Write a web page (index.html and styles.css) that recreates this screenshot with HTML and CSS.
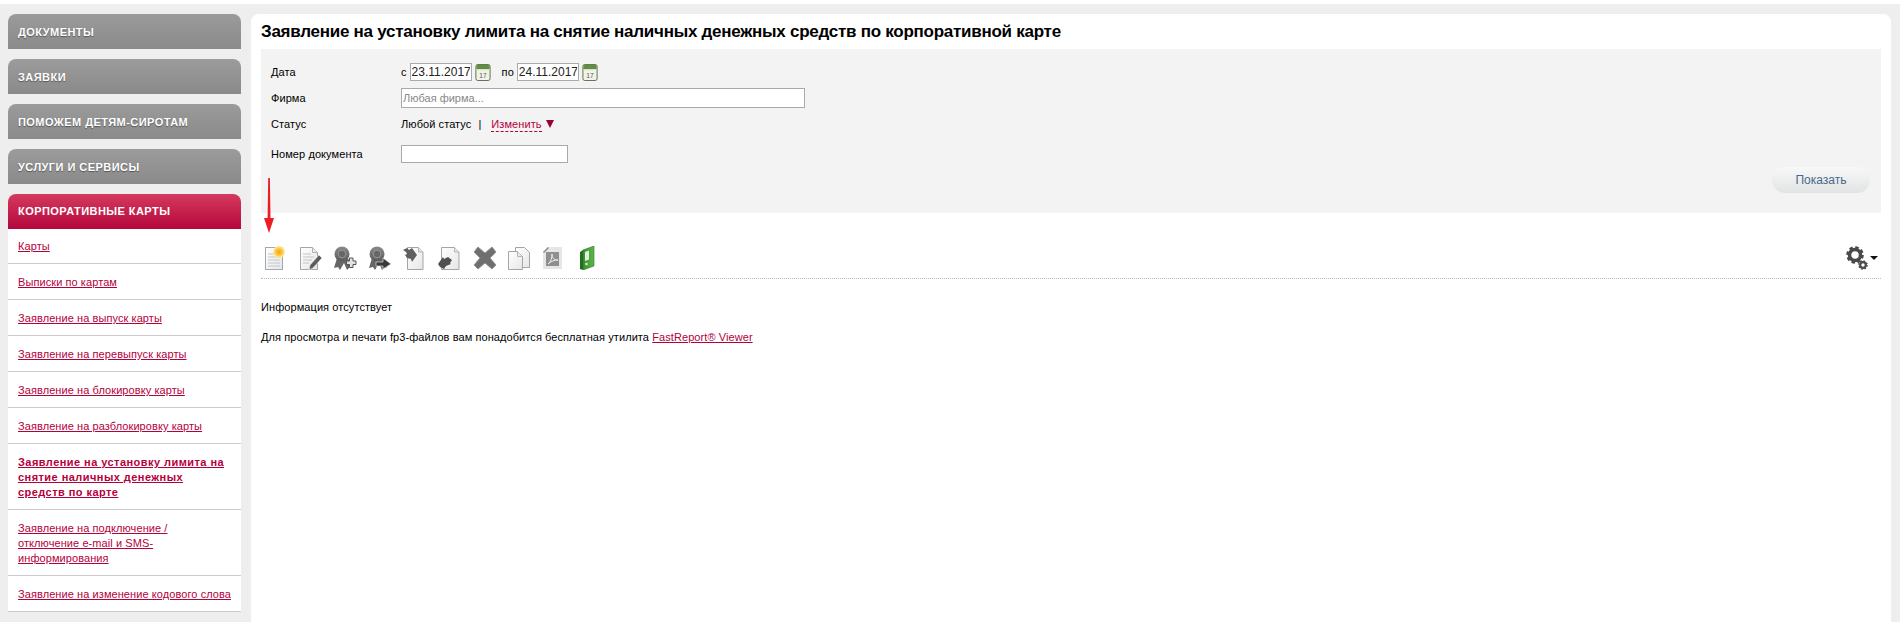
FILE: index.html
```html
<!DOCTYPE html>
<html lang="ru">
<head>
<meta charset="utf-8">
<link rel="stylesheet" href="styles.css">
</head>
<body>
<svg class="defs" width="0" height="0">
    <defs>
        <linearGradient id="seal" x1="0" y1="0" x2="0" y2="1"><stop offset="0" stop-color="#8a8a8a"/><stop offset="1" stop-color="#5a5a5a"/></linearGradient>
        <linearGradient id="paper" x1="0" y1="0" x2="1" y2="1"><stop offset="0" stop-color="#fff"/><stop offset="1" stop-color="#e6e6e6"/></linearGradient>
        <linearGradient id="binder" x1="0" y1="0" x2="1" y2="0"><stop offset="0" stop-color="#3b8f30"/><stop offset="1" stop-color="#5fb548"/></linearGradient>
        <radialGradient id="spark"><stop offset="0" stop-color="#f7a11c"/><stop offset=".55" stop-color="#fdc63d"/><stop offset="1" stop-color="#ffeeb0"/></radialGradient>
        <symbol id="ribbon" viewBox="0 0 24 24">
            <path d="M4 12l-3 10 4-1 2 3 4-7 3 7 3-3 2 1-4-10z" fill="#666"/>
            <circle cx="9" cy="8" r="7.500" fill="url(#seal)"/>
            <circle cx="9" cy="8" r="3.800" fill="#666" stroke="#979797"/>
        </symbol>
        <symbol id="calendar" viewBox="0 0 16 18">
            <rect x=".5" y=".5" width="15" height="17" rx="2" fill="#f1f3e6" stroke="#5c6b4a"/>
            <path d="M1 2.500a1.500 1.500 0 0 1 1.500-1.500h11a1.500 1.500 0 0 1 1.500 1.500v3h-14z" fill="#5f8f3f"/>
            <path d="M1 6h14" stroke="#dbe4c8"/>
            <text x="8" y="15" text-anchor="middle" class="cal_day">17</text>
        </symbol>
    </defs>
</svg>

<div class="page">
    <div class="side">
        <div class="side_head">Документы</div>
        <div class="side_head">Заявки</div>
        <div class="side_head">Поможем детям-сиротам</div>
        <div class="side_head">Услуги и сервисы</div>
        <div class="side_head side_on">Корпоративные карты</div>
        <ul class="side_menu">
            <li><a href="#">Карты</a></li>
            <li><a href="#">Выписки по картам</a></li>
            <li><a href="#">Заявление на выпуск карты</a></li>
            <li><a href="#">Заявление на перевыпуск карты</a></li>
            <li><a href="#">Заявление на блокировку карты</a></li>
            <li><a href="#">Заявление на разблокировку карты</a></li>
            <li><a href="#" class="cur">Заявление на установку лимита на<br>снятие наличных денежных<br>средств по карте</a></li>
            <li><a href="#">Заявление на подключение /<br>отключение e-mail и SMS-<br>информирования</a></li>
            <li><a href="#">Заявление на изменение кодового слова</a></li>
        </ul>
    </div>

    <div class="main">
        <h1>Заявление на установку лимита на снятие наличных денежных средств по корпоративной карте</h1>

        <form class="filter" action="#">
            <div class="row">
                <label>Дата</label>
                <div class="dates">
                    <span>с</span>
                    <input type="text" class="date" value="23.11.2017">
                    <svg class="cal"><use href="#calendar"/></svg>
                    <span class="po">по</span>
                    <input type="text" class="date" value="24.11.2017">
                    <svg class="cal"><use href="#calendar"/></svg>
                </div>
            </div>
            <div class="row">
                <label>Фирма</label>
                <input type="text" class="firm" placeholder="Любая фирма...">
            </div>
            <div class="row">
                <label>Статус</label>
                <div class="status">
                    <span>Любой статус</span>
                    <span class="sep">|</span>
                    <a href="#" class="change">Изменить</a>
                    <span class="tri"></span>
                </div>
            </div>
            <div class="row row_num">
                <label>Номер документа</label>
                <input type="text" class="num">
            </div>
            <div class="buttons">
                <button type="button" class="show">Показать</button>
            </div>
        </form>

        <div class="toolbar">
            <div class="tools">
                <svg class="tool" viewBox="0 0 24 24">
                    <rect x="2.500" y="1.500" width="17" height="22" fill="url(#paper)" stroke="#9fa9b3"/>
                    <path d="M5 8h9M5 11h12M5 14h12M5 17h12M5 20h12" stroke="#c2c6cb"/>
                    <circle cx="16" cy="6" r="6" fill="url(#spark)"/>
                </svg>
                <svg class="tool" viewBox="0 0 24 24">
                    <path d="M2.500 1.500h12l5 5v17h-17z" fill="url(#paper)" stroke="#a5a5a5"/>
                    <path d="M14.500 1.500v5h5" fill="#e9e9e9" stroke="#b5b5b5"/>
                    <path d="M5 8h8M5 11h11M5 14h9M5 17h6" stroke="#c4c4c4"/>
                    <path d="M21 9l3 3-9 10-4 2 1-5z" fill="#5c5c5c" stroke="#f5f5f5" stroke-width=".6"/>
                </svg>
                <svg class="tool" viewBox="0 0 24 24">
                    <use href="#ribbon" width="24" height="24"/>
                    <path d="M13.500 15h3v-3h3.500v3h3v3.500h-3v3h-3.500v-3h-3z" fill="#e2e2e2" stroke="#555"/>
                </svg>
                <svg class="tool" viewBox="0 0 24 24">
                    <use href="#ribbon" width="24" height="24"/>
                    <path d="M8 16h7v-4l8 6-8 5v-3h-7z" fill="#3a3a3a" stroke="#eee" stroke-width=".6"/>
                </svg>
                <svg class="tool" viewBox="0 0 24 24">
                    <path d="M4.500 1.500h11l4.500 4.500v17.500h-15.500z" fill="url(#paper)" stroke="#a5a5a5"/>
                    <path d="M15.500 1.500v4.500h4.500" fill="#e9e9e9" stroke="#b5b5b5"/>
                    <path d="M0 4l4-2 2 2 3-2 5 7-5 7-1-3-4-1-2-3 2-1-1-2z" fill="#5f5f5f"/>
                </svg>
                <svg class="tool" viewBox="0 0 24 24">
                    <path d="M3.500 1.500h13l4.500 4.500v17.500h-17.500z" fill="url(#paper)" stroke="#a5a5a5"/>
                    <path d="M16.500 1.500v4.500h4.500" fill="#e9e9e9" stroke="#b5b5b5"/>
                    <path d="M0 18l5-7 1 2 4-2 4 3-2 3 1 1-5 2-2 3-4-2z" fill="#505050"/>
                </svg>
                <svg class="tool" viewBox="0 0 24 24">
                    <path d="M5 1l7 6 7-6 4 5-6 6 6 7-4 4-7-6-7 6-4-4 6-7-6-6z" fill="#6f6f6f" stroke="#939393" stroke-linejoin="round"/>
                </svg>
                <svg class="tool" viewBox="0 0 24 24">
                    <path d="M7.500 1.500h9l5 5v15h-14z" fill="url(#paper)" stroke="#a5a5a5"/>
                    <path d="M.5 5.500h9l5 5v13h-14z" fill="url(#paper)" stroke="#a5a5a5"/>
                    <path d="M9.500 5.500v5h5" fill="#eaeaea" stroke="#b5b5b5"/>
                </svg>
                <svg class="tool" viewBox="0 0 24 24">
                    <path d="M0 6l5-5h14v22h-19z" fill="#e6e6e6"/>
                    <path d="M0 6l5-5 1 1-5 5z" fill="#8a8a8a"/>
                    <rect x="3" y="6" width="13" height="14" fill="#8f8f8f"/>
                    <path d="M5 18c3-2 4-6 4-10 0 4 2 6 6 6-3 0-7 1-10 4z" fill="none" stroke="#eee"/>
                </svg>
                <svg class="tool" viewBox="0 0 24 24">
                    <path d="M5 4l11-4v20l-11 4z" fill="url(#binder)" stroke="#2b7a28" stroke-width=".6"/>
                    <path d="M5 4l-3 2v17l3 1z" fill="#22701f"/>
                    <path d="M7 6l4-1.500v9l-4 1.500z" fill="#e3efdc"/>
                    <circle cx="8.500" cy="18" r="1.300" fill="#d6e8cc"/>
                </svg>
            </div>
            <div class="gear">
                <svg class="gear_pic" viewBox="0 0 22 24">
                    <circle cx="9" cy="9" r="5.500" fill="none" stroke="#4a4a4a" stroke-width="3.500"/>
                    <circle cx="9" cy="9" r="7.500" fill="none" stroke="#4a4a4a" stroke-width="2.600" stroke-dasharray="3.400 2.490"/>
                    <circle cx="17" cy="19" r="2.800" fill="none" stroke="#4a4a4a" stroke-width="2.200"/>
                    <circle cx="17" cy="19" r="4.200" fill="none" stroke="#4a4a4a" stroke-width="1.300" stroke-dasharray="1.600 1.700"/>
                </svg>
                <span class="caret"></span>
            </div>
        </div>

        <p class="empty">Информация отсутствует</p>
        <p class="note">Для просмотра и печати fp3-файлов вам понадобится бесплатная утилита <a href="#">FastReport® Viewer</a></p>

        <svg class="arrow" viewBox="0 0 10 56">
            <path d="M4.200 0h1.700l.6 40h3.500l-5 15-5-15h3.600z" fill="#ee1c25"/>
        </svg>
    </div>
</div>
</body>
</html>
```

FILE: styles.css
```css
html, body {margin:0; padding:0; height:100%; background:#fff; overflow:hidden;}
body {font:11px/15px "Liberation Sans", "Noto Sans", sans-serif; letter-spacing:.08px; color:#000;}
a {color:#b5003c;}
.defs {position:absolute;}
.cal_day {font:7px "Liberation Sans", sans-serif; fill:#556;}

.page {display:flex; gap:10px; height:618px; margin-top:4px; padding:10px 9px 0 8px; box-sizing:border-box; background:#eee;}

.side {width:233px; flex:none; margin-bottom:10px; display:flex; flex-direction:column; gap:10px;}
.side_head {height:35px; padding:0 10px; line-height:36px; border-radius:8px 8px 0 0; background:linear-gradient(#9b9b9b, #8a8a8a); color:#fff; font-weight:bold; letter-spacing:.45px; text-transform:uppercase; text-shadow:0 1px 1px #555;}
.side_on {background:linear-gradient(#d43a5d, #b5073d); margin-bottom:-10px; line-height:35px; text-shadow:none;}
.side_menu {list-style:none; margin:0; padding:0; background:#fff;}
.side_menu li {padding:11px 5px 9px 10px; border-bottom:1px solid #ccc;}
.side_menu li:first-child {padding-top:10px; padding-bottom:9px;}
.side_menu .cur {font-weight:bold; letter-spacing:.45px;}

.main {flex:1; position:relative; padding:0 10px; background:#fff; border-radius:8px 8px 0 0;}
h1 {margin:0; height:35px; font-size:17px; line-height:36px; font-weight:bold; letter-spacing:-.26px;}

.filter {height:164px; padding:10px 11px 0 10px; box-sizing:border-box; background:#f3f3f3;}
.row {display:flex; align-items:center; height:26px;}
.row label {width:130px; flex:none;}
.row_num {margin-top:4px;}
.dates {display:flex; align-items:center;}
input {margin:0; padding:0 1px; box-sizing:border-box; border:1px solid #a9a9a9; background:#fff; font:11px "Liberation Sans", sans-serif; color:#222;}
.date {width:62px; height:18px; margin-left:3px; border-color:#aaa; font-size:12px;}
.cal {width:16px; height:17px; margin:1px 0 0 3px;}
.po {margin:0 0 0 11px;}
.firm {width:404px; height:20px;}
.firm::placeholder {color:#888;}
.num {width:167px; height:18px;}
.status {display:flex; align-items:center;}
.sep {margin:0 10px 0 7px;}
.change {text-decoration:none; border-bottom:1px dashed #b5003c; line-height:14px;}
.tri {margin-left:4px; border:4px solid transparent; border-top:8px solid #9c0033; border-bottom:0;}
.buttons {display:flex; justify-content:flex-end;}
.show {width:98px; height:26px; padding:0; border:0; border-radius:13px; background:linear-gradient(#f8f8f8, #e2e3e4); color:#47698a; font:12px "Liberation Sans", sans-serif;}

.toolbar {display:flex; justify-content:space-between; height:66px; box-sizing:border-box; padding:33px 0 0 2px; border-bottom:1px dotted #bbb;}
.tools {display:flex; gap:11px;}
.tool {width:24px; height:24px;}
.gear {display:flex; margin-right:3px;}
.gear_pic {width:22px; height:24px;}
.caret {margin:10px 0 0 2px; height:0; border:4px solid transparent; border-top:4px solid #111; border-bottom:0;}

p {margin:0;}
.empty {margin-top:21px;}
.note {margin-top:15px;}

.arrow {position:absolute; left:13px; top:164px; width:10px; height:56px;}
```
